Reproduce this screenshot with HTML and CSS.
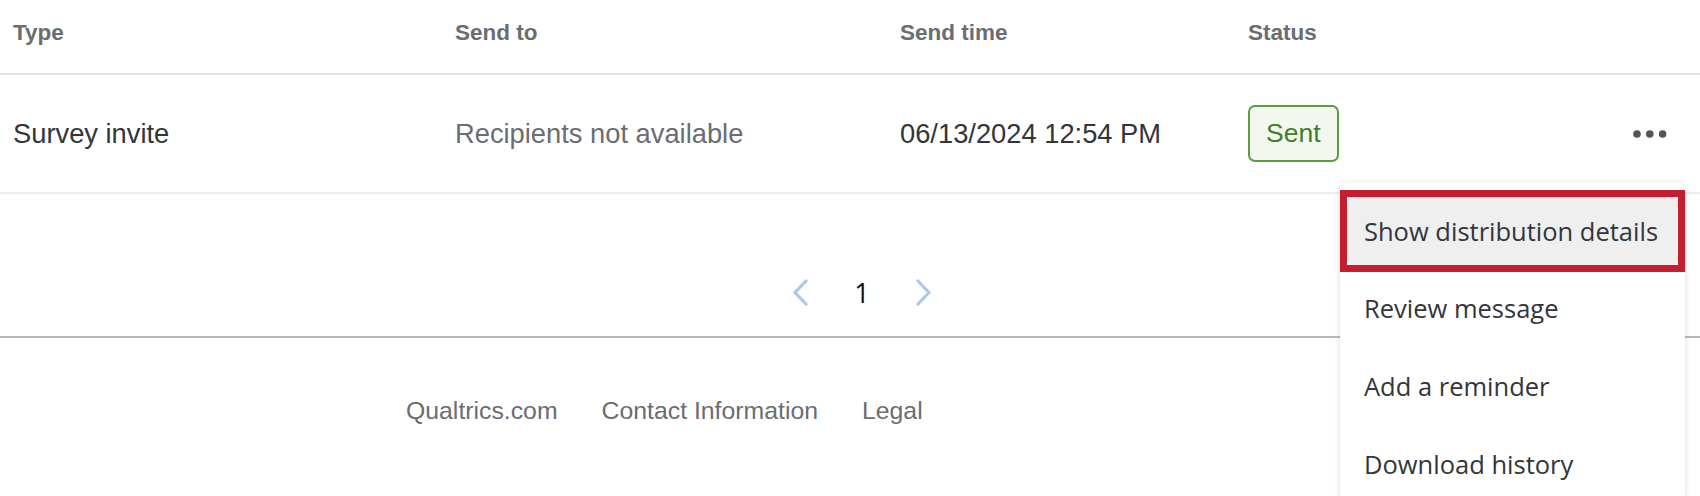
FILE: index.html
```html
<!DOCTYPE html>
<html lang="en">
<head>
<meta charset="utf-8">
<title>Distributions</title>
<link rel="stylesheet" href="styles.css">
</head>
<body>
<div class="page">
  <div class="table">
    <div class="row head">
      <div class="cell">Type</div>
      <div class="cell">Send to</div>
      <div class="cell">Send time</div>
      <div class="cell">Status</div>
      <div class="cell"></div>
    </div>
    <div class="row data">
      <div class="cell dark">Survey invite</div>
      <div class="cell muted">Recipients not available</div>
      <div class="cell dark">06/13/2024 12:54 PM</div>
      <div class="cell"><span class="badge">Sent</span></div>
      <div class="cell actions">
        <button class="more" aria-label="More actions">
          <svg width="34" height="8" viewBox="0 0 34 8"><circle cx="4" cy="4" r="3.8"/><circle cx="16.8" cy="4" r="3.8"/><circle cx="29.6" cy="4" r="3.8"/></svg>
        </button>
      </div>
    </div>
  </div>

  <div class="pager">
    <span class="chev">
      <svg width="18" height="27" viewBox="0 0 18 27"><path d="M15 2 L4 13.5 L15 25"/></svg>
    </span>
    <span class="pagenum">1</span>
    <span class="chev">
      <svg width="18" height="27" viewBox="0 0 18 27"><path d="M3 2 L14 13.5 L3 25"/></svg>
    </span>
  </div>

  <footer class="footer">
    <a class="flink">Qualtrics.com</a>
    <a class="flink">Contact Information</a>
    <a class="flink">Legal</a>
  </footer>

  <div class="menu">
    <div class="item active">Show distribution details</div>
    <div class="item">Review message</div>
    <div class="item">Add a reminder</div>
    <div class="item">Download history</div>
  </div>
</div>
</body>
</html>
```

FILE: styles.css
```css
* { box-sizing: border-box; }
html, body { margin: 0; padding: 0; background: #ffffff; }
body { width: 1700px; height: 496px; overflow: hidden; font-family: "Liberation Sans", Arial, sans-serif; }

.page { position: relative; width: 1700px; height: 496px; overflow: hidden; }

.row {
  display: grid;
  grid-template-columns: 442px 445px 348px 1fr auto;
  align-items: center;
  padding: 0 33px 0 13px;
}
.head {
  height: 75px;
  border-bottom: 2px solid #e2e2e2;
  font-weight: 700;
  font-size: 22.5px;
  color: #6a6d71;
  padding-bottom: 8px;
}
.data {
  height: 119px;
  border-bottom: 2px solid #ececec;
  font-size: 27.3px;
}
.dark { color: #32363a; }
.muted { color: #6a6d71; }

.badge {
  display: inline-flex;
  align-items: center;
  height: 57px;
  padding: 0 16px;
  border: 2px solid #5f9b45;
  border-radius: 7px;
  background: #f2f8ee;
  color: #3f7f2b;
  font-size: 26.5px;
}

.more {
  border: 0;
  background: none;
  padding: 0;
  display: flex;
  align-items: center;
}
.more svg { fill: #515458; display: block; }

.pager {
  height: 142px;
  padding: 85px 0 0 24px;
  display: flex;
  justify-content: center;
  align-items: flex-start;
}
.chev { display: flex; width: 18px; height: 27px; }
.chev svg { fill: none; stroke: #a8c8ef; stroke-width: 3.2; stroke-linecap: round; stroke-linejoin: round; }
.pagenum {
  font-family: "Open Sans", sans-serif;
  font-size: 27px;
  line-height: 27px;
  color: #111111;
  margin: 0 45px;
}

.footer {
  border-top: 2px solid #b8b8b8;
  padding: 58px 0 0 406px;
  display: flex;
  gap: 44px;
}
.flink {
  font-size: 24.8px;
  line-height: 30px;
  color: #6a6d71;
  text-decoration: none;
}

.menu {
  position: absolute;
  left: 1340px;
  top: 182px;
  width: 345px;
  height: 314px;
  padding: 8px 7px 0 7px;
  background: #ffffff;
  border-radius: 8px 8px 0 0;
  box-shadow: 0 1px 6px rgba(0, 0, 0, 0.14);
  font-family: "Open Sans", sans-serif;
  font-size: 25.5px;
  color: #32363a;
}
.item {
  height: 78px;
  display: flex;
  align-items: center;
  padding-left: 17px;
}
.item.active {
  position: relative;
  height: 68px;
  margin: 7px 0 4px 0;
  background: #efefef;
  border-radius: 6px;
}
.item.active::after {
  content: "";
  position: absolute;
  left: -7px;
  right: -7px;
  top: -7px;
  bottom: -7px;
  border: 7px solid #c41f30;
}
```
